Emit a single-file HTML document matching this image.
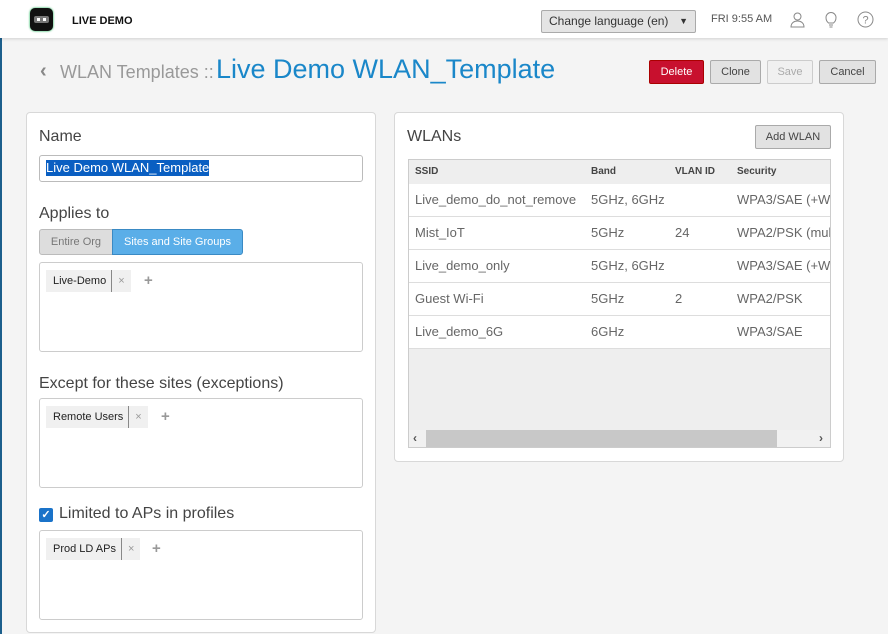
<!DOCTYPE html>
<html><head><style>
*{box-sizing:border-box;margin:0;padding:0}
body{width:888px;height:634px;overflow:hidden;background:#f4f4f4;font-family:"Liberation Sans",sans-serif;color:#333;position:relative}
.a{position:absolute}
.hdr{left:0;top:0;width:888px;height:38px;background:#fff;box-shadow:0 1px 3px rgba(0,0,0,.15)}
.btn{position:absolute;height:24px;border:1px solid #aaa;border-radius:2px;background:#e2e2e2;font-size:11px;color:#444;text-align:center;line-height:22px}
.panel{position:absolute;background:#fff;border:1px solid #d8d8d8;border-radius:4px}
.lbl{position:absolute;font-size:16px;color:#444}
.box{position:absolute;left:39px;width:324px;height:90px;border:1px solid #ccc;border-radius:3px;background:#fff}
.tag{position:absolute;left:6px;top:7px;height:22px;background:#f0f0f0;font-size:11px;color:#222;line-height:22px;padding-left:7px}
.tag i{font-style:normal;display:inline-block;border-left:1px solid #888;margin-left:5px;padding:0 6px;color:#999;height:22px}
.plus{position:absolute;top:7px;line-height:22px;color:#999;font-size:15px;font-weight:bold}
.row{position:absolute;left:0;width:422px;height:33px;border-bottom:1px solid #ddd;background:#fff;font-size:13px;color:#666;line-height:32px}
.row span,.th span{position:absolute;white-space:nowrap}
.th{position:absolute;left:0;top:0;width:422px;height:24px;background:#eee;font-size:10px;font-weight:bold;color:#444;line-height:24px}
</style></head><body>
<div class="a" style="left:0;top:0;width:2px;height:634px;background:#1c5f8c"></div>
<div class="a hdr"></div>
<div class="a" style="left:30px;top:8px;width:23px;height:23px;border-radius:5px;background:#111;box-shadow:0 0 2px #0a4"></div>
<div class="a" style="left:34px;top:16px;width:15px;height:7px;border-radius:2px;background:#777"></div>
<div class="a" style="left:37px;top:18px;width:3px;height:3px;background:#fff"></div>
<div class="a" style="left:43px;top:18px;width:3px;height:3px;background:#fff"></div>
<div class="a" style="left:72px;top:15px;font-size:11px;font-weight:bold;color:#111">LIVE DEMO</div>
<div class="a" style="left:541px;top:10px;width:155px;height:23px;border:1px solid #aaa;border-radius:2px;background:#e4e4e4;font-size:12px;color:#333;line-height:21px;padding-left:7px">Change language (en)<span style="position:absolute;right:7px;top:0;font-size:9px">▼</span></div>
<div class="a" style="left:711px;top:13px;font-size:11px;color:#555">FRI 9:55 AM</div>
<svg class="a" style="left:789px;top:11px" width="17" height="17" viewBox="0 0 17 17" fill="none" stroke="#888" stroke-width="1"><circle cx="8.5" cy="5.5" r="3.5"/><path d="M2 16c0-4 3-6 6.5-6s6.5 2 6.5 6z"/></svg>
<svg class="a" style="left:824px;top:11px" width="14" height="18" viewBox="0 0 14 18" fill="none" stroke="#888" stroke-width="1"><path d="M4.5 12C2 10 2 8 2 6.5a5 5 0 0 1 10 0c0 1.5 0 3.5-2.5 5.5z M5 14h4 M5.5 16h3"/></svg>
<svg class="a" style="left:857px;top:11px" width="17" height="17" viewBox="0 0 17 17" fill="none" stroke="#888" stroke-width="1"><circle cx="8.5" cy="8.5" r="7.5"/><text x="8.5" y="12.5" font-size="11" text-anchor="middle" fill="#888" stroke="none" font-family="Liberation Sans">?</text></svg>

<div class="a" style="left:40px;top:60px;font-size:20px;color:#888;font-weight:bold">‹</div>
<div class="a" style="left:60px;top:62px;font-size:18px;color:#999">WLAN Templates ::</div>
<div class="a" style="left:216px;top:54px;font-size:27px;color:#1a87c9">Live Demo WLAN_Template</div>
<div class="btn" style="left:649px;top:60px;width:55px;background:#c8102e;border-color:#a00;color:#fff">Delete</div>
<div class="btn" style="left:710px;top:60px;width:51px">Clone</div>
<div class="btn" style="left:767px;top:60px;width:46px;background:#f0f0f0;border-color:#ccc;color:#aaa">Save</div>
<div class="btn" style="left:819px;top:60px;width:57px">Cancel</div>

<div class="panel" style="left:26px;top:112px;width:350px;height:521px"></div>
<div class="lbl" style="left:39px;top:128px">Name</div>
<div class="a" style="left:39px;top:155px;width:324px;height:27px;border:1px solid #bbb;border-radius:3px;background:#fff"></div>
<div class="a" style="left:46px;top:160px;height:16px;background:#0a5fc2;color:#fff;font-size:13px;line-height:16px">Live Demo WLAN_Template</div>
<div class="lbl" style="left:39px;top:205px">Applies to</div>
<div class="a" style="left:39px;top:229px;width:74px;height:26px;background:#ddd;border:1px solid #bbb;border-radius:3px 0 0 3px;font-size:11px;color:#777;text-align:center;line-height:24px">Entire Org</div>
<div class="a" style="left:112px;top:229px;width:131px;height:26px;background:#5aaee8;border:1px solid #3a8ac4;border-radius:0 3px 3px 0;font-size:11px;color:#fff;text-align:center;line-height:24px">Sites and Site Groups</div>
<div class="box" style="top:262px"><div class="tag">Live-Demo<i>×</i></div><div class="plus" style="left:104px">+</div></div>
<div class="lbl" style="left:39px;top:375px">Except for these sites (exceptions)</div>
<div class="box" style="top:398px"><div class="tag">Remote Users<i>×</i></div><div class="plus" style="left:121px">+</div></div>
<div class="a" style="left:39px;top:508px;width:14px;height:14px;background:#1a73c9;border-radius:2px;color:#fff;font-size:11px;line-height:14px;text-align:center;font-weight:bold">✓</div>
<div class="lbl" style="left:59px;top:505px">Limited to APs in profiles</div>
<div class="box" style="top:530px"><div class="tag">Prod LD APs<i>×</i></div><div class="plus" style="left:112px">+</div></div>

<div class="panel" style="left:394px;top:112px;width:450px;height:350px"></div>
<div class="lbl" style="left:407px;top:128px">WLANs</div>
<div class="btn" style="left:755px;top:125px;width:76px;height:24px">Add WLAN</div>
<div class="a" style="left:408px;top:159px;width:423px;height:289px;border:1px solid #ccc;background:#eee;overflow:hidden">
<div class="th"><span style="left:6px">SSID</span><span style="left:182px">Band</span><span style="left:266px">VLAN ID</span><span style="left:328px">Security</span></div>
<div class="row" style="top:24px"><span style="left:6px">Live_demo_do_not_remove</span><span style="left:182px">5GHz, 6GHz</span><span style="left:328px">WPA3/SAE (+WPA</span></div>
<div class="row" style="top:57px"><span style="left:6px">Mist_IoT</span><span style="left:182px">5GHz</span><span style="left:266px">24</span><span style="left:328px">WPA2/PSK (mul</span></div>
<div class="row" style="top:90px"><span style="left:6px">Live_demo_only</span><span style="left:182px">5GHz, 6GHz</span><span style="left:328px">WPA3/SAE (+WPA</span></div>
<div class="row" style="top:123px"><span style="left:6px">Guest Wi-Fi</span><span style="left:182px">5GHz</span><span style="left:266px">2</span><span style="left:328px">WPA2/PSK</span></div>
<div class="row" style="top:156px"><span style="left:6px">Live_demo_6G</span><span style="left:182px">6GHz</span><span style="left:328px">WPA3/SAE</span></div>
<div class="a" style="left:0;top:270px;width:422px;height:17px;background:#f1f1f1"></div>
<div class="a" style="left:17px;top:270px;width:351px;height:17px;background:#c8c8c8"></div>
<div class="a" style="left:4px;top:270px;font-size:12px;color:#555;font-weight:bold;line-height:17px">‹</div>
<div class="a" style="left:410px;top:270px;font-size:12px;color:#555;font-weight:bold;line-height:17px">›</div>
</div>
</body></html>
